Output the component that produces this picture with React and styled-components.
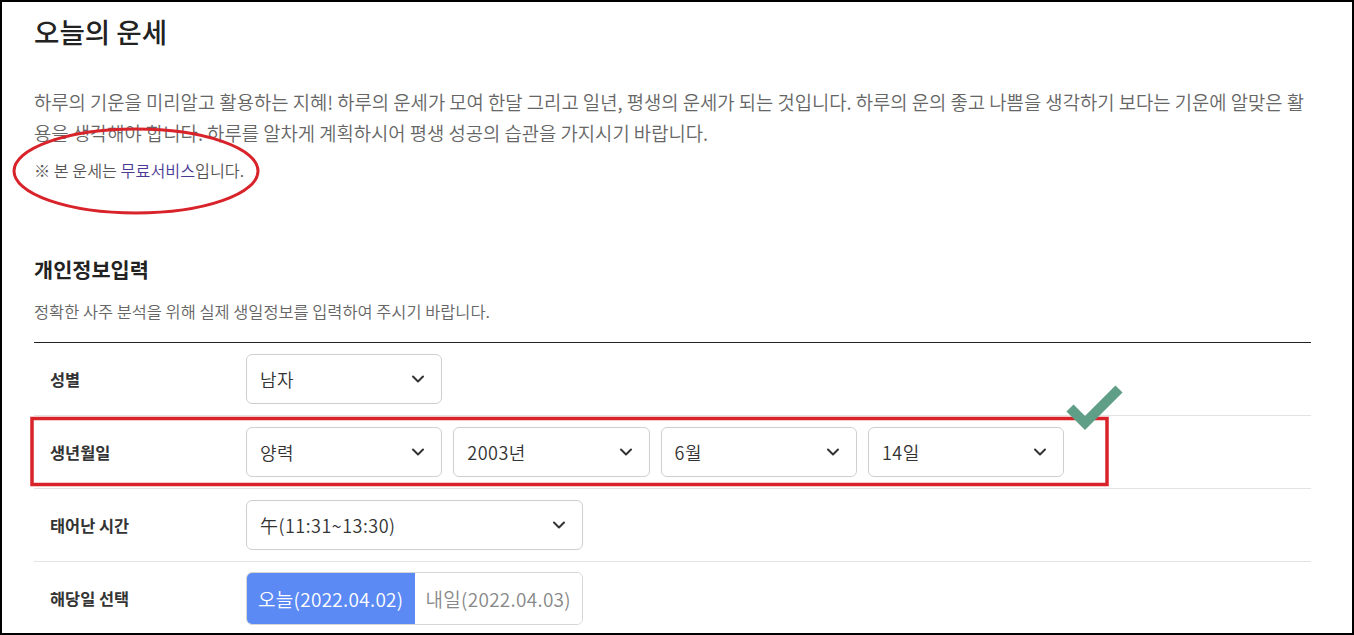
import React, { useState } from 'react';
import styled, { createGlobalStyle } from 'styled-components';

const GlobalStyle = createGlobalStyle`
  * { box-sizing: border-box; }
  body {
    margin: 0;
    background: #fff;
    font-family: "Noto Sans CJK KR", "Noto Sans", sans-serif;
    color: #333;
  }
`;

const Frame = styled.div`
  position: relative;
  height: 635px;
  border: 2px solid #000;
  overflow: hidden;
  background: #fff;
`;

const Content = styled.div`
  padding: 0 41px 0 32px;
`;

const Title = styled.h1`
  margin: 11px 0 0;
  font-size: 27.6px;
  line-height: 36px;
  font-weight: 500;
  color: #222;
`;

const Intro = styled.p`
  margin: 37px 0 0;
  font-size: 18.8px;
  line-height: 31px;
  color: #666;
  font-weight: 350;
  word-break: break-all;
`;

const Note = styled.p`
  margin: 10px 0 0;
  font-size: 16.2px;
  line-height: 24px;
  color: #555;
  font-weight: 350;
`;

const FreeLink = styled.a`
  color: #4b3a94;
  text-decoration: none;
`;

const SectionTitle = styled.h2`
  margin: 73px 0 0;
  font-size: 20.8px;
  line-height: 28px;
  font-weight: 700;
  color: #222;
`;

const SectionDesc = styled.p`
  margin: 17px 0 0;
  font-size: 16.4px;
  line-height: 22px;
  color: #666;
  font-weight: 350;
`;

const Table = styled.div`
  margin-top: 20px;
  border-top: 1px solid #222;
`;

const Row = styled.div`
  display: grid;
  grid-template-columns: 212px 1fr;
  align-items: center;
  height: 73px;
  border-bottom: 1px solid #e3e3e3;
`;

const Label = styled.div`
  padding-left: 16px;
  font-size: 16.4px;
  font-weight: 700;
  color: #333;
`;

const Controls = styled.div`
  display: flex;
  gap: 11px;
`;

const SelectBox = styled.div`
  display: flex;
  align-items: center;
  justify-content: space-between;
  width: ${(p) => p.$width || 196.3}px;
  height: 50px;
  padding: 0 16px 0 13px;
  border: 1px solid #cfcfcf;
  border-radius: 6px;
  font-size: 18px;
  font-weight: 350;
  letter-spacing: 0.5px;
  color: #333;
  background: #fff;
`;

const Toggle = styled.div`
  display: flex;
  width: 337px;
  height: 53px;
  border: 1px solid #d6d6d6;
  border-radius: 6px;
  overflow: hidden;
`;

const ToggleButton = styled.button`
  flex: 1;
  border: none;
  font-family: inherit;
  font-size: 19px;
  font-weight: 350;
  letter-spacing: 0.3px;
  cursor: pointer;
  padding: 0;
  background: ${(p) => (p.$active ? '#5b8af5' : '#fff')};
  color: ${(p) => (p.$active ? '#fff' : '#888')};
`;

const Marks = styled.svg`
  position: absolute;
  left: -2px;
  top: -2px;
  pointer-events: none;
`;

const Chevron = () => (
  <svg width="14" height="14" viewBox="0 0 14 14">
    <path d="M2 4.5 L7 9.5 L12 4.5" fill="none" stroke="#333" strokeWidth="2" strokeLinecap="round" strokeLinejoin="round" />
  </svg>
);

const Select = ({ value, width }) => (
  <SelectBox $width={width}>
    <span>{value}</span>
    <Chevron />
  </SelectBox>
);

const App = () => {
  const [day, setDay] = useState('today');

  return (
    <Frame>
      <GlobalStyle />
      <Content>
        <Title>오늘의 운세</Title>
        <Intro>
          하루의 기운을 미리알고 활용하는 지혜! 하루의 운세가 모여 한달 그리고 일년, 평생의 운세가 되는 것입니다. 하루의 운의 좋고 나쁨을 생각하기 보다는 기운에 알맞은 활용을 생각해야 합니다. 하루를 알차게 계획하시어 평생 성공의 습관을 가지시기 바랍니다.
        </Intro>
        <Note>
          ※ 본 운세는 <FreeLink href="#">무료서비스</FreeLink>입니다.
        </Note>

        <SectionTitle>개인정보입력</SectionTitle>
        <SectionDesc>정확한 사주 분석을 위해 실제 생일정보를 입력하여 주시기 바랍니다.</SectionDesc>

        <Table>
          <Row>
            <Label>성별</Label>
            <Controls>
              <Select value="남자" />
            </Controls>
          </Row>
          <Row>
            <Label>생년월일</Label>
            <Controls>
              <Select value="양력" />
              <Select value="2003년" />
              <Select value="6월" />
              <Select value="14일" />
            </Controls>
          </Row>
          <Row>
            <Label>태어난 시간</Label>
            <Controls>
              <Select value="午(11:31~13:30)" width={337} />
            </Controls>
          </Row>
          <Row>
            <Label>해당일 선택</Label>
            <Controls>
              <Toggle>
                <ToggleButton $active={day === 'today'} onClick={() => setDay('today')}>
                  오늘(2022.04.02)
                </ToggleButton>
                <ToggleButton $active={day === 'tomorrow'} onClick={() => setDay('tomorrow')}>
                  내일(2022.04.03)
                </ToggleButton>
              </Toggle>
            </Controls>
          </Row>
        </Table>
      </Content>

      <Marks width="1354" height="635" viewBox="0 0 1354 635">
        <ellipse cx="136" cy="171" rx="122" ry="42" fill="none" stroke="#d8232a" strokeWidth="3" />
        <rect x="32" y="418.5" width="1075" height="66" fill="none" stroke="#d8232a" strokeWidth="3.5" />
        <polyline points="1070,408 1085,423 1119,389" fill="none" stroke="#5f9e87" strokeWidth="10" />
      </Marks>
    </Frame>
  );
};

export default App;
